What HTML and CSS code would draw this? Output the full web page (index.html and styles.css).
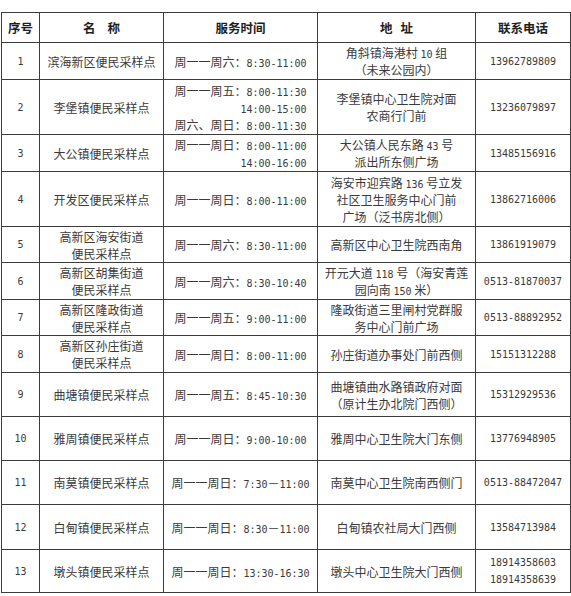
FILE: index.html
```html
<!DOCTYPE html>
<html lang="zh-CN">
<head>
<meta charset="utf-8">
<title>便民采样点</title>
<link rel="stylesheet" href="styles.css">
</head>
<body>
<table class="sites">
  <colgroup>
    <col class="c-no"><col class="c-name"><col class="c-time"><col class="c-addr"><col class="c-tel">
  </colgroup>
  <thead>
    <tr class="h30"><th>序号</th><th>名<span class="sp2"></span>称</th><th>服务时间</th><th>地<span class="sp1"></span>址</th><th>联系电话</th></tr>
  </thead>
  <tbody>
    <tr class="h37"><td class="n">1</td><td>滨海新区便民采样点</td><td>周一一周六：<span class="n">8:30-11:00</span></td><td>角斜镇海港村 <span class="n">10</span> 组<br>（未来公园内）</td><td class="n">13962789809</td></tr>
    <tr class="h55"><td class="n">2</td><td>李堡镇便民采样点</td><td><div class="rblock">周一一周五：<span class="n">8:00-11:30</span><br><span class="n">14:00-15:00</span><br>周六、周日：<span class="n">8:00-11:30</span></div></td><td>李堡镇中心卫生院对面<br>农商行门前</td><td class="n">13236079897</td></tr>
    <tr class="h37"><td class="n">3</td><td>大公镇便民采样点</td><td><div class="rblock">周一一周日：<span class="n">8:00-11:00</span><br><span class="n">14:00-16:00</span></div></td><td>大公镇人民东路 <span class="n">43</span> 号<br>派出所东侧广场</td><td class="n">13485156916</td></tr>
    <tr class="h55"><td class="n">4</td><td>开发区便民采样点</td><td>周一一周日：<span class="n">8:00-11:00</span></td><td>海安市迎宾路 <span class="n">136</span> 号立发<br>社区卫生服务中心门前<br>广场（泛书房北侧）</td><td class="n">13862716006</td></tr>
    <tr class="h36"><td class="n">5</td><td>高新区海安街道<br>便民采样点</td><td>周一一周六：<span class="n">8:30-11:00</span></td><td>高新区中心卫生院西南角</td><td class="n">13861919079</td></tr>
    <tr class="h37"><td class="n">6</td><td>高新区胡集街道<br>便民采样点</td><td>周一一周六：<span class="n">8:30-10:40</span></td><td>开元大道 <span class="n">118</span> 号（海安青莲<br>园向南 <span class="n">150</span> 米）</td><td class="n">0513-81870037</td></tr>
    <tr class="h36"><td class="n">7</td><td>高新区隆政街道<br>便民采样点</td><td>周一一周五：<span class="n">9:00-11:00</span></td><td>隆政街道三里闸村党群服<br>务中心门前广场</td><td class="n">0513-88892952</td></tr>
    <tr class="h37"><td class="n">8</td><td>高新区孙庄街道<br>便民采样点</td><td>周一一周日：<span class="n">8:00-11:00</span></td><td>孙庄街道办事处门前西侧</td><td class="n">15151312288</td></tr>
    <tr class="h44"><td class="n">9</td><td>曲塘镇便民采样点</td><td>周一一周五：<span class="n">8:45-10:30</span></td><td>曲塘镇曲水路镇政府对面<br>（原计生办北院门西侧）</td><td class="n">15312929536</td></tr>
    <tr class="h44"><td class="n">10</td><td>雅周镇便民采样点</td><td>周一一周日：<span class="n">9:00-10:00</span></td><td>雅周中心卫生院大门东侧</td><td class="n">13776948905</td></tr>
    <tr class="h44"><td class="n">11</td><td>南莫镇便民采样点</td><td>周一一周日：<span class="n">7:30</span>－<span class="n">11:00</span></td><td>南莫中心卫生院南西侧门</td><td class="n">0513-88472047</td></tr>
    <tr class="h45"><td class="n">12</td><td>白甸镇便民采样点</td><td>周一一周日：<span class="n">8:30</span>－<span class="n">11:00</span></td><td>白甸镇农社局大门西侧</td><td class="n">13584713984</td></tr>
    <tr class="h43"><td class="n">13</td><td>墩头镇便民采样点</td><td>周一一周日：<span class="n">13:30-16:30</span></td><td>墩头中心卫生院大门西侧</td><td class="n tel2">18914358603<br>18914358639</td></tr>
  </tbody>
</table>
</body>
</html>
```

FILE: styles.css
```css
html, body {
  margin: 0;
  padding: 0;
  background: #ffffff;
}
body {
  padding: 12px 0 0 1px;
  font-family: "Noto Sans CJK SC", "Noto Sans", sans-serif;
  font-size: 12px;
  color: #3a3a3a;
}
.sites {
  border-collapse: collapse;
  table-layout: fixed;
  width: 569px;
}
.c-no { width: 38px; }
.c-name { width: 124px; }
.c-time { width: 154px; }
.c-addr { width: 158px; }
.c-tel { width: 95px; }

.sites th,
.sites td {
  border: 1px solid #3c3c3c;
  padding: 0;
  text-align: center;
  vertical-align: middle;
  line-height: 17px;
  white-space: nowrap;
  overflow: hidden;
}
.sites th {
  font-weight: bold;
  font-size: 12.5px;
  color: #1e1e1e;
}
.sp2 { display: inline-block; width: 12px; }
.sp1 { display: inline-block; width: 8px; }

.n {
  font-family: "DejaVu Sans Mono", "Liberation Mono", monospace;
  font-size: 10px;
  line-height: 10px;
}
td.n { font-size: 10px; line-height: 17px; }
.tel2 { line-height: 18px; }

.rblock {
  display: inline-block;
  text-align: right;
  line-height: 17px;
}

.h30 { height: 30px; }
.h36 { height: 36px; }
.h37 { height: 37px; }
.h43 { height: 43px; }
.h44 { height: 44px; }
.h45 { height: 45px; }
.h55 { height: 55px; }
```
